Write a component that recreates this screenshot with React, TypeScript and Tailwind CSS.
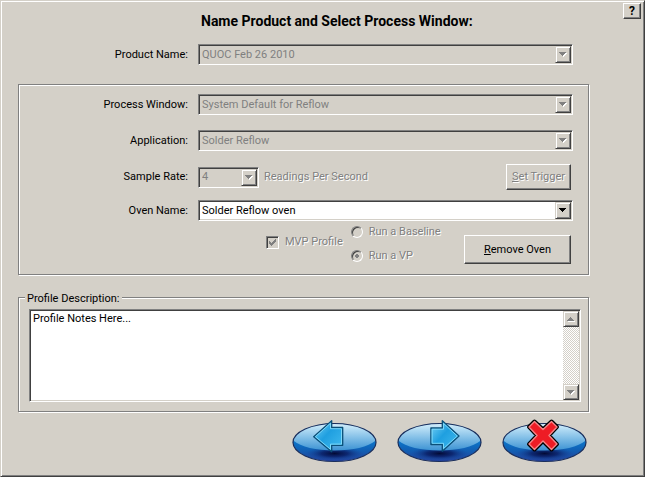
import type { ReactNode, SelectHTMLAttributes } from "react";
import clsx from "clsx";

const sunken =
    "border border-t-[#808080] border-l-[#808080] border-r-white border-b-white shadow-[inset_1px_1px_#404040,inset_-1px_-1px_#d4d0c8]";
const raised =
    "border border-t-white border-l-white border-r-[#404040] border-b-[#404040] shadow-[inset_-1px_-1px_#808080]";
const raisedInner =
    "border border-t-[#d4d0c8] border-l-[#d4d0c8] border-r-[#404040] border-b-[#404040] shadow-[inset_1px_1px_#fff,inset_-1px_-1px_#808080]";
const etched = "border border-[#808080] shadow-[inset_1px_1px_#fff,1px_1px_#fff]";
const greyed = "text-[#808080] [text-shadow:1px_1px_#fff]";

function Triangle({ up = false, disabled = false }: { up?: boolean; disabled?: boolean }) {
    const points = up ? "0,4 7,4 7,3 6,3 6,2 5,2 5,1 4,1 4,0 3,0 3,1 2,1 2,2 1,2 1,3 0,3" : "0,0 7,0 7,1 6,1 6,2 5,2 5,3 4,3 4,4 3,4 3,3 2,3 2,2 1,2 1,1 0,1";
    return (
        <svg width="8" height="5" viewBox="0 0 8 5" shapeRendering="crispEdges" aria-hidden="true">
            {disabled && <polygon points={points} fill="#fff" transform="translate(1 1)" />}
            <polygon points={points} fill={disabled ? "#808080" : "#000"} />
        </svg>
    );
}

function Combo({ className, disabled, children, ...rest }: SelectHTMLAttributes<HTMLSelectElement>) {
    return (
        <div className={clsx("relative h-[21px]", className)}>
            <select
                disabled={disabled}
                className={clsx(
                    "block w-full h-full appearance-none pl-[3px] pr-5 leading-4 opacity-100 outline-none",
                    sunken,
                    disabled ? "bg-[#d4d0c8] text-[#808080]" : "bg-white text-black"
                )}
                {...rest}
            >
                {children}
            </select>
            <span
                className={clsx(
                    "absolute right-0.5 top-0.5 bottom-0.5 w-4 flex items-center justify-center bg-[#d4d0c8] pointer-events-none",
                    raisedInner
                )}
            >
                <Triangle disabled={disabled} />
            </span>
        </div>
    );
}

function Row({ id, label, children }: { id: string; label: string; children: ReactNode }) {
    return (
        <div className="grid grid-cols-[154px_1fr] gap-x-[10px] items-center">
            <label htmlFor={id} className="text-right">{label}</label>
            {children}
        </div>
    );
}

function RadioOption({ label, checked = false }: { label: string; checked?: boolean }) {
    return (
        <label className={clsx("flex items-center gap-1.5 h-4", greyed)}>
            <input
                type="radio"
                name="run"
                disabled
                defaultChecked={checked}
                className="appearance-none size-3 rounded-full border border-t-[#808080] border-l-[#808080] border-r-white border-b-white shadow-[inset_1px_1px_#404040] checked:bg-[radial-gradient(circle_at_center,#808080_2px,transparent_2px)]"
            />
            {label}
        </label>
    );
}

function OvalButton({ id, label, children }: { id: string; label: string; children: ReactNode }) {
    return (
        <button type="button" aria-label={label}>
            <svg width="85" height="43" viewBox="0 0 85 43" className="block overflow-visible" aria-hidden="true">
                <defs>
                    <linearGradient id={`${id}-base`} x1="0" y1="0" x2="0" y2="1">
                        <stop offset="0.4" stopColor="#0b7bd0" />
                        <stop offset="0.7" stopColor="#1160b4" />
                        <stop offset="1" stopColor="#24409a" />
                    </linearGradient>
                    <radialGradient id={`${id}-shade`}>
                        <stop offset="0" stopColor="#030a36" />
                        <stop offset="0.45" stopColor="#0a1c62" stopOpacity="0.8" />
                        <stop offset="1" stopColor="#15459c" stopOpacity="0" />
                    </radialGradient>
                    <linearGradient id={`${id}-gloss`} x1="0" y1="0" x2="0" y2="1">
                        <stop offset="0" stopColor="#d2eefb" />
                        <stop offset="0.5" stopColor="#86c1e8" />
                        <stop offset="1" stopColor="#3c93d3" />
                    </linearGradient>
                    <linearGradient id={`${id}-arrow`} x1="0" y1="0" x2="1" y2="1">
                        <stop offset="0" stopColor="#7fd6f8" />
                        <stop offset="0.45" stopColor="#1f9fe0" />
                        <stop offset="1" stopColor="#45bdf0" />
                    </linearGradient>
                </defs>
                <ellipse cx="42.5" cy="22.5" rx="41.5" ry="19" fill={`url(#${id}-base)`} />
                <ellipse cx="42.5" cy="33.5" rx="29" ry="7" fill={`url(#${id}-shade)`} />
                <path d="M1.2 20.5C3 10 21 3.8 42.5 3.8S82 10 83.8 20.5C76 27 61 30.5 42.5 30.5S9 27 1.2 20.5Z" fill={`url(#${id}-gloss)`} />
                <ellipse cx="42.5" cy="22.5" rx="41.5" ry="19" fill="none" stroke="#1c2f5c" strokeWidth="1.2" />
                {children}
            </svg>
        </button>
    );
}

function Arrow({ id, points, inner }: { id: string; points: string; inner: string }) {
    return (
        <>
            <polygon points={points} fill={`url(#${id}-arrow)`} stroke="#0b4f78" strokeWidth="1.3" strokeLinejoin="round" />
            <polygon points={inner} fill="none" stroke="#86dcfa" strokeWidth="0.9" />
        </>
    );
}

export default function App() {
    const cross = "32.5,1.5 41,9.5 49.5,1.5 55,7 47,15.5 55,24 49.5,29.5 41,21 32.5,29.5 27,24 35,15.5 27,7";

    return (
        <main className="min-h-screen bg-[#d4d0c8] text-black text-[11px] leading-4 font-[Roboto,'Liberation_Sans',sans-serif] border border-t-[#d4d0c8] border-l-[#d4d0c8] border-r-[#404040] border-b-[#404040] shadow-[inset_1px_1px_#fff,inset_-1px_-1px_#808080]">
            <header className="flex items-start justify-between pt-0.5 pr-[3px]">
                <h1 className="pl-[200px] pt-2 text-[14px] leading-5 font-bold">Name Product and Select Process Window:</h1>
                <button type="button" aria-label="Help" className={clsx("w-[18px] h-4 flex items-center justify-center text-[12px] leading-3 font-bold", raised)}>
                    ?
                </button>
            </header>

            <form className="pl-[17px] pr-[55px] pt-[13px]">
                <div className="px-4">
                    <Row id="product" label="Product Name:">
                        <Combo id="product" disabled>
                            <option>QUOC Feb 26 2010</option>
                        </Combo>
                    </Row>
                </div>

                <section className={clsx("mt-[19px] px-[15px] pt-[9px] pb-[9px]", etched)}>
                    <div className="flex flex-col gap-[15px]">
                        <Row id="window" label="Process Window:">
                            <Combo id="window" disabled>
                                <option>System Default for Reflow</option>
                            </Combo>
                        </Row>
                        <Row id="application" label="Application:">
                            <Combo id="application" disabled>
                                <option>Solder Reflow</option>
                            </Combo>
                        </Row>
                    </div>
                    <div className="mt-[13px] mb-[10px]">
                        <Row id="rate" label="Sample Rate:">
                            <div className="flex items-center pr-0.5">
                                <Combo id="rate" disabled className="w-[61px]">
                                    <option>4</option>
                                </Combo>
                                <span className={clsx("pl-[5px]", greyed)}>Readings Per Second</span>
                                <button type="button" disabled className={clsx("ml-auto w-[65px] h-[26px] whitespace-nowrap", raised, greyed)}>
                                    <u>S</u>et Trigger
                                </button>
                            </div>
                        </Row>
                    </div>
                    <Row id="oven" label="Oven Name:">
                        <Combo id="oven">
                            <option>Solder Reflow oven</option>
                        </Combo>
                    </Row>

                    <div className="flex items-start pl-[232px] pr-0.5 pt-[3px]">
                        <label className={clsx("flex items-center gap-1.5 mt-[10px] h-4 whitespace-nowrap", greyed)}>
                            <span className="grid">
                                <input type="checkbox" disabled defaultChecked className={clsx("col-start-1 row-start-1 appearance-none size-[13px]", sunken)} />
                                <svg width="13" height="13" viewBox="0 0 13 13" className="col-start-1 row-start-1 pointer-events-none" shapeRendering="crispEdges" aria-hidden="true">
                                    <path d="M3 5h1v1h1v1h1v-1h1v-1h1v-1h1v-1h1v3h-1v1h-1v1h-1v1h-1v1h-1v-1h-1v-1h-1z" fill="#808080" />
                                </svg>
                            </span>
                            MVP Profile
                        </label>
                        <div className="ml-2 flex flex-col gap-2" role="radiogroup" aria-label="Run type">
                            <RadioOption label="Run a Baseline" />
                            <RadioOption label="Run a VP" checked />
                        </div>
                        <button type="button" className={clsx("ml-auto mt-[11px] mb-px w-[107px] h-[29px]", raised)}>
                            <u>R</u>emove Oven
                        </button>
                    </div>
                </section>

                <section className={clsx("mt-[22px] pl-[10px] pr-[7px] pb-[9px] flex flex-col", etched)}>
                    <label htmlFor="notes" className="self-start -mt-[7px] -ml-1 px-0.5 bg-[#d4d0c8]">Profile Description:</label>
                    <div className={clsx("mt-0.5 h-[93px] p-px flex bg-white", sunken)}>
                        <textarea id="notes" defaultValue="Profile Notes Here..." className="flex-1 min-w-0 resize-none px-0.5 leading-4 outline-none overflow-hidden" />
                        <div className="w-4 flex flex-col bg-[repeating-conic-gradient(#fff_0_25%,#d4d0c8_0_50%)] bg-[length:2px_2px]">
                            <button type="button" disabled aria-label="Scroll up" className={clsx("h-4 flex items-center justify-center bg-[#d4d0c8]", raisedInner)}>
                                <Triangle up disabled />
                            </button>
                            <button type="button" disabled aria-label="Scroll down" className={clsx("mt-auto h-4 flex items-center justify-center bg-[#d4d0c8]", raisedInner)}>
                                <Triangle disabled />
                            </button>
                        </div>
                    </div>
                </section>

                <nav className="flex justify-end gap-5 mt-2 pr-0.5">
                    <OvalButton id="back" label="Back">
                        <Arrow
                            id="back"
                            points="21.7,16.7 39.7,0.7 39.7,7.5 50.7,7.5 50.7,25.3 39.7,25.3 39.7,31.8"
                            inner="23.4,16.7 38.5,3.2 38.5,8.7 49.5,8.7 49.5,24.1 38.5,24.1 38.5,29.3"
                        />
                    </OvalButton>
                    <OvalButton id="next" label="Next">
                        <Arrow
                            id="next"
                            points="62,16 45.3,0.7 45.3,8 33.9,8 33.9,24.5 45.3,24.5 45.3,31.2"
                            inner="60.3,16 46.5,3.4 46.5,9.2 35.1,9.2 35.1,23.3 46.5,23.3 46.5,28.5"
                        />
                    </OvalButton>
                    <OvalButton id="cancel" label="Cancel">
                        <polygon points={cross} fill="#000" stroke="#000" strokeWidth="4" strokeLinejoin="round" />
                        <polygon points={cross} fill="#ee1c25" stroke="#f8868a" strokeWidth="1.4" strokeLinejoin="round" />
                    </OvalButton>
                </nav>
            </form>
        </main>
    );
}
